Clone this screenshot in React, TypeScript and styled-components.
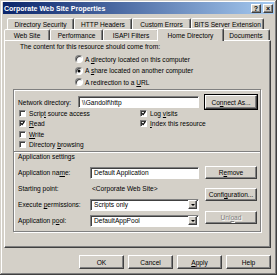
import React from "react";
import styled, { createGlobalStyle, css } from "styled-components";

const GlobalStyle = createGlobalStyle`
  html, body {
    margin: 0;
    padding: 0;
    background: #fff;
  }
  body {
    font-family: "Liberation Sans", Arial, sans-serif;
    font-size: 6.6px;
    color: #000;
  }
  * {
    box-sizing: border-box;
  }
`;

const FACE = "#d4d0c8";

const raised = css`
  border: 1px solid;
  border-color: #fff #404040 #404040 #fff;
  box-shadow: inset -1px -1px 0 #808080;
  background: ${FACE};
`;

const sunken = css`
  border: 1px solid;
  border-color: #808080 #fff #fff #808080;
  box-shadow: inset 1px 1px 0 #404040;
  background: #fff;
`;

const backTabs = [
  { label: "Directory Security", w: 67 },
  { label: "HTTP Headers", w: 58 },
  { label: "Custom Errors", w: 59 },
  { label: "BITS Server Extension", w: 73 },
];

const frontTabs = [
  { label: "Web Site", w: 46 },
  { label: "Performance", w: 53 },
  { label: "ISAPI Filters", w: 56 },
  { label: "Home Directory", w: 63, active: true },
  { label: "Documents", w: 48 },
];

const App = () => {
  return (
    <>
      <GlobalStyle />
      <Window>
        <TitleBar>
          <Title>Corporate Web Site Properties</Title>
          <CaptionButtons>
            <CaptionButton>?</CaptionButton>
            <CaptionButton>×</CaptionButton>
          </CaptionButtons>
        </TitleBar>

        <Body>
          <TabRow $offset={3}>
            {backTabs.map((t) => (
              <Tab key={t.label} $w={t.w}>{t.label}</Tab>
            ))}
          </TabRow>
          <TabRow $offset={0}>
            {frontTabs.map((t) => (
              <Tab key={t.label} $w={t.w} $active={t.active}>{t.label}</Tab>
            ))}
          </TabRow>

          <Panel>
            <Intro>The content for this resource should come from:</Intro>
            <RadioList>
              <RadioRow>
                <Radio />
                <span>A <u>d</u>irectory located on this computer</span>
              </RadioRow>
              <RadioRow>
                <Radio $checked />
                <span>A <u>s</u>hare located on another computer</span>
              </RadioRow>
              <RadioRow>
                <Radio />
                <span>A redirection to a <u>U</u>RL</span>
              </RadioRow>
            </RadioList>

            <Group>
              <NetRow>
                <NetLabel>Network directory:</NetLabel>
                <TextField $w={121}>\\Gandolf\http</TextField>
                <Button $w={52} $h={14} $default>Co<u>n</u>nect As...</Button>
              </NetRow>

              <Checks>
                <CheckColumn>
                  <CheckRow><CheckBox /><span>Scrip<u>t</u> source access</span></CheckRow>
                  <CheckRow><CheckBox $checked /><span><u>R</u>ead</span></CheckRow>
                  <CheckRow><CheckBox /><span><u>W</u>rite</span></CheckRow>
                  <CheckRow><CheckBox /><span>Directory <u>b</u>rowsing</span></CheckRow>
                </CheckColumn>
                <CheckColumn>
                  <CheckRow><CheckBox $checked /><span>Log <u>v</u>isits</span></CheckRow>
                  <CheckRow><CheckBox $checked /><span><u>I</u>ndex this resource</span></CheckRow>
                </CheckColumn>
              </Checks>

              <Separator />
              <SectionTitle>Application settings</SectionTitle>

              <AppSection>
                <AppGrid>
                  <span>Application na<u>m</u>e:</span>
                  <TextField $w={109}>Default Application</TextField>
                  <span>Starting point:</span>
                  <StaticValue>&lt;Corporate Web Site&gt;</StaticValue>
                  <span>Execute <u>p</u>ermissions:</span>
                  <Select>
                    <span>Scripts only</span>
                    <DropButton><Arrow /></DropButton>
                  </Select>
                  <span>Application p<u>o</u>ol:</span>
                  <Select>
                    <span>DefaultAppPool</span>
                    <DropButton><Arrow /></DropButton>
                  </Select>
                </AppGrid>
                <AppButtons>
                  <Button $w={52} $h={13}>R<u>e</u>move</Button>
                  <Button $w={52} $h={13} $top={9}>Confi<u>g</u>uration...</Button>
                  <Button $w={52} $h={13} $top={10} disabled>Unl<u>o</u>ad</Button>
                </AppButtons>
              </AppSection>
            </Group>
          </Panel>

          <ButtonBar>
            <Button $w={45} $h={14}>OK</Button>
            <Button $w={45} $h={14}>Cancel</Button>
            <Button $w={45} $h={14}><u>A</u>pply</Button>
            <Button $w={45} $h={14}>Help</Button>
          </ButtonBar>
        </Body>
      </Window>
    </>
  );
};

const Window = styled.div`
  width: 277px;
  height: 275px;
  background: ${FACE};
  box-shadow: inset -1px -1px 0 #404040, inset 1px 1px 0 ${FACE},
    inset -2px -2px 0 #808080, inset 2px 2px 0 #fff;
  padding: 2px 3px 3px 3px;
  display: flex;
  flex-direction: column;
  overflow: hidden;
`;

const TitleBar = styled.div`
  height: 12px;
  background: linear-gradient(to right, #0a246a, #a6caf0);
  display: flex;
  align-items: center;
  justify-content: space-between;
  padding: 0 1px 0 1px;
`;

const Title = styled.span`
  color: #fff;
  font-weight: bold;
  font-size: 7px;
  white-space: nowrap;
`;

const CaptionButtons = styled.div`
  display: flex;
  gap: 2px;
`;

const CaptionButton = styled.div`
  ${raised};
  width: 10px;
  height: 9px;
  font-size: 7px;
  font-weight: bold;
  line-height: 7px;
  text-align: center;
`;

const Body = styled.div`
  padding: 4px 0 0 1px;
  display: flex;
  flex-direction: column;
`;

const TabRow = styled.div<{ $offset: number }>`
  display: flex;
  align-items: flex-end;
  height: 11px;
  padding-left: ${({ $offset }) => $offset}px;
`;

const Tab = styled.div<{ $w: number; $active?: boolean }>`
  width: ${({ $w }) => $w}px;
  height: 11px;
  flex-shrink: 0;
  border: 1px solid;
  border-bottom: none;
  border-color: #fff #404040 transparent #fff;
  box-shadow: inset -1px 0 0 #808080;
  border-radius: 2px 2px 0 0;
  background: ${FACE};
  display: flex;
  align-items: center;
  justify-content: center;
  white-space: nowrap;
  ${({ $active, $w }) =>
    $active &&
    css`
      width: ${$w + 4}px;
      height: 13px;
      margin: 0 -2px -1px;
      position: relative;
      z-index: 1;
    `}
`;

const Panel = styled.div`
  ${raised};
  width: 267px;
  height: 208px;
  display: flex;
  flex-direction: column;
`;

const Intro = styled.div`
  margin-top: 1px;
  height: 10px;
  line-height: 10px;
  padding-left: 15px;
  white-space: nowrap;
`;

const RadioList = styled.div`
  margin-top: 1.25px;
  padding-left: 70px;
  display: flex;
  flex-direction: column;
`;

const RadioRow = styled.label`
  display: flex;
  align-items: center;
  gap: 2px;
  height: 11.5px;
  white-space: nowrap;
`;

const Radio = styled.span<{ $checked?: boolean }>`
  position: relative;
  width: 8px;
  height: 8px;
  border-radius: 50%;
  border: 1px solid;
  border-color: #808080 #fff #fff #808080;
  box-shadow: inset 1px 1px 0 #404040;
  background: #fff;
  flex-shrink: 0;
  ${({ $checked }) =>
    $checked &&
    css`
      &::after {
        content: "";
        position: absolute;
        left: 2px;
        top: 2px;
        width: 2px;
        height: 2px;
        border-radius: 50%;
        background: #000;
        box-shadow: 0 0 0 0.5px #000;
      }
    `}
`;

const Group = styled.div`
  margin: 1.25px 0 0 8px;
  width: 248px;
  height: 143px;
  border: 1px solid #808080;
  box-shadow: 1px 1px 0 #fff, inset 1px 1px 0 #fff;
  display: flex;
  flex-direction: column;
`;

const NetRow = styled.div`
  margin-top: 5px;
  padding-left: 4px;
  height: 14px;
  display: flex;
  align-items: center;
`;

const NetLabel = styled.span`
  width: 60px;
  white-space: nowrap;
`;

const TextField = styled.div<{ $w: number }>`
  ${sunken};
  width: ${({ $w }) => $w}px;
  height: 12px;
  padding-left: 3px;
  display: flex;
  align-items: center;
  white-space: nowrap;
  overflow: hidden;
`;

const Button = styled.button<{ $w: number; $h: number; $top?: number; $default?: boolean }>`
  ${raised};
  width: ${({ $w }) => $w}px;
  height: ${({ $h }) => $h}px;
  margin: ${({ $top }) => $top ?? 0}px 0 0 0;
  padding: 0;
  font-family: inherit;
  font-size: inherit;
  color: #000;
  white-space: nowrap;
  flex-shrink: 0;
  ${({ $default }) =>
    $default &&
    css`
      margin-left: 6px;
      outline: 1px solid #000;
      outline-offset: 0;
    `}
  &:disabled {
    color: #808080;
    text-shadow: 1px 1px 0 #fff;
  }
`;

const Checks = styled.div`
  margin-top: -1px;
  padding-left: 5px;
  display: grid;
  grid-template-columns: 121px auto;
`;

const CheckColumn = styled.div`
  display: flex;
  flex-direction: column;
`;

const CheckRow = styled.label`
  display: flex;
  align-items: center;
  gap: 3px;
  height: 10.5px;
  white-space: nowrap;
`;

const CheckBox = ({ $checked }: { $checked?: boolean }) => (
  <Box>
    {$checked && (
      <svg width="5" height="5" viewBox="0 0 7 7">
        <polyline points="1,3 3,5 6,1" fill="none" stroke="#000" strokeWidth="1.6" />
      </svg>
    )}
  </Box>
);

const Box = styled.span`
  ${sunken};
  width: 7px;
  height: 7px;
  flex-shrink: 0;
  display: flex;
  align-items: center;
  justify-content: center;
`;

const Separator = styled.div`
  margin-top: 1px;
  height: 2px;
  border-top: 1px solid #808080;
  border-bottom: 1px solid #fff;
`;

const SectionTitle = styled.div`
  height: 8px;
  line-height: 8px;
  padding-left: 4px;
`;

const AppSection = styled.div`
  margin-top: 5px;
  padding-left: 4px;
  display: flex;
`;

const AppGrid = styled.div`
  display: grid;
  grid-template-columns: 72px 109px;
  grid-auto-rows: 13px;
  row-gap: 3px;
  align-items: center;
  white-space: nowrap;
`;

const StaticValue = styled.span`
  padding-left: 2px;
`;

const Select = styled.div`
  ${sunken};
  height: 12px;
  padding: 1px 1px 1px 3px;
  display: flex;
  align-items: center;
  justify-content: space-between;
`;

const DropButton = styled.div`
  ${raised};
  width: 9px;
  height: 9px;
  display: flex;
  align-items: center;
  justify-content: center;
`;

const Arrow = styled.span`
  width: 0;
  height: 0;
  border-left: 2px solid transparent;
  border-right: 2px solid transparent;
  border-top: 2px solid #000;
`;

const AppButtons = styled.div`
  margin-left: 6px;
  display: flex;
  flex-direction: column;
`;

const ButtonBar = styled.div`
  width: 267px;
  margin-top: 7px;
  display: flex;
  justify-content: flex-end;
  gap: 4px;
`;

export default App;
